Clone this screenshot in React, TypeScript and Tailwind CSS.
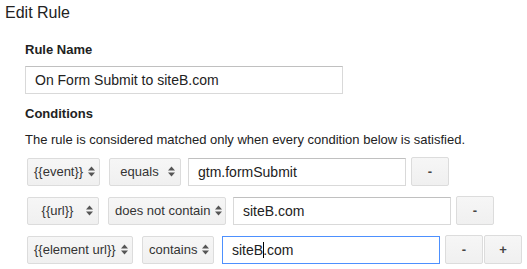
import React from "react";

function Arrows() {
  return (
    <svg width="7" height="11" viewBox="0 0 7 11" className="shrink-0">
      <path d="M0 4.5 L3.5 0.5 L7 4.5 Z" fill="#555" />
      <path d="M0 6.5 L3.5 10.5 L7 6.5 Z" fill="#555" />
    </svg>
  );
}

function Select({ label, className }: { label: string; className: string }) {
  return (
    <div
      className={`flex h-[28px] shrink-0 items-center rounded-[2px] border border-[#dcdcdc] bg-linear-to-b from-[#f6f6f6] to-[#f0f0f0] pl-[6px] pr-[5px] text-[13px] leading-[16px] text-[#333] ${className}`}
    >
      <span className="flex-1 whitespace-nowrap text-center">{label}</span>
      <span className="ml-[5px]">
        <Arrows />
      </span>
    </div>
  );
}

function TextBox({
  children,
  focused,
  className,
}: {
  children: React.ReactNode;
  focused?: boolean;
  className: string;
}) {
  return (
    <div
      className={`h-[28px] shrink-0 whitespace-nowrap bg-white pl-[9px] pt-[1px] text-[14px] leading-[25px] text-[#222] ${
        focused
          ? "border border-[#4d90fe]"
          : "border border-[#d9d9d9] border-t-[#c0c0c0]"
      } ${className}`}
    >
      {children}
    </div>
  );
}

function SmallButton({ label, className }: { label: string; className: string }) {
  return (
    <div
      className={`flex h-[29px] w-[38px] shrink-0 items-center justify-center rounded-[2px] border border-[#dcdcdc] bg-linear-to-b from-[#f6f6f6] to-[#f0f0f0] text-[13px] font-bold text-[#444] ${className}`}
    >
      {label}
    </div>
  );
}

export default function App() {
  return (
    <div className="h-[269px] w-[527px] overflow-hidden bg-white pt-[3px] font-['Liberation_Sans',Arial,sans-serif] text-[#222]">
      <h1 className="pl-[5px] text-[16px] leading-[20px] text-[#222]">Edit Rule</h1>

      <div className="pl-[25px]">
        <h2 className="mt-[19px] text-[13px] font-bold leading-[16px]">Rule Name</h2>
        <TextBox className="mt-[8px] w-[318px]">On Form Submit to siteB.com</TextBox>

        <h2 className="mt-[12px] text-[13px] font-bold leading-[16px]">Conditions</h2>
        <p className="mt-[10px] text-[13px] leading-[16px] text-[#222]">
          The rule is considered matched only when every condition below is satisfied.
        </p>

        <div className="ml-[2px] mt-[9px] flex flex-col gap-[10px]">
          <div className="flex items-center">
            <Select label="{{event}}" className="w-[73px]" />
            <Select label="equals" className="ml-[9px] w-[72px]" />
            <TextBox className="ml-[7px] w-[218px]">gtm.formSubmit</TextBox>
            <SmallButton label="-" className="ml-[5px]" />
          </div>
          <div className="flex items-center">
            <Select label="{{url}}" className="w-[72px]" />
            <Select label="does not contain" className="ml-[9px] w-[118px]" />
            <TextBox className="ml-[7px] w-[218px]">siteB.com</TextBox>
            <SmallButton label="-" className="ml-[5px]" />
          </div>
          <div className="flex items-center">
            <Select label="{{element url}}" className="w-[106px]" />
            <Select label="contains" className="ml-[9px] w-[72px]" />
            <TextBox focused className="ml-[8px] w-[218px]">
              siteB
              <span className="-mr-px inline-block h-[16px] w-0 border-l border-black align-[-3px]" />
              .com
            </TextBox>
            <SmallButton label="-" className="ml-[5px]" />
            <SmallButton label="+" className="ml-[1px]" />
          </div>
        </div>
      </div>
    </div>
  );
}
